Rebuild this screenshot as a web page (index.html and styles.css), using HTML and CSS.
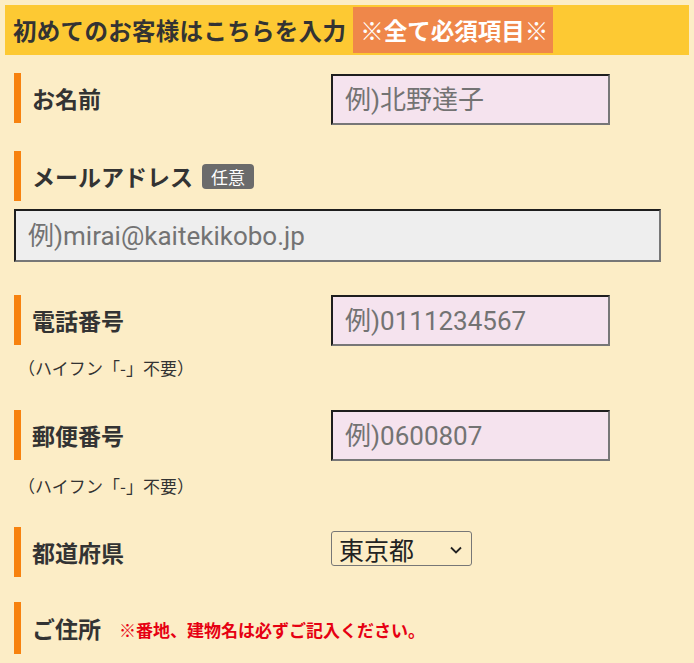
FILE: index.html
```html
<!DOCTYPE html>
<html lang="ja">
<head>
<meta charset="utf-8">
<title>初めてのお客様</title>
<link rel="stylesheet" href="styles.css">
</head>
<body>
<div class="page">
  <div class="head">
    <span class="head-title">初めてのお客様はこちらを入力</span>
    <span class="head-badge">※全て必須項目※</span>
  </div>

  <div class="form">
    <div class="field f-name">
      <div class="label">お名前</div>
      <input class="inp" type="text" placeholder="例)北野達子">
    </div>

    <div class="field f-mail">
      <div class="label label-auto">メールアドレス<span class="opt">任意</span></div>
    </div>
    <input class="inp inp-wide" type="text" placeholder="例)mirai@kaitekikobo.jp">

    <div class="field f-tel">
      <div class="label">電話番号</div>
      <input class="inp" type="text" placeholder="例)0111234567">
    </div>
    <div class="note">（ハイフン「-」不要）</div>

    <div class="field f-zip">
      <div class="label">郵便番号</div>
      <input class="inp" type="text" placeholder="例)0600807">
    </div>
    <div class="note note-zip">（ハイフン「-」不要）</div>

    <div class="field f-pref">
      <div class="label">都道府県</div>
      <div class="select">
        <span>東京都</span>
        <svg class="chev" width="14" height="10" viewBox="0 0 14 10"><path d="M2 2.5 L7 7.5 L12 2.5" fill="none" stroke="#222" stroke-width="1.8"/></svg>
      </div>
    </div>

    <div class="field f-addr">
      <div class="label label-auto">ご住所<span class="warn">※番地、建物名は必ずご記入ください。</span></div>
    </div>
  </div>
</div>
</body>
</html>
```

FILE: styles.css
```css
html, body {
  margin: 0;
  padding: 0;
  background: #fcedc6;
}
body {
  font-family: Roboto, "Noto Sans CJK JP", sans-serif;
  color: #333;
  overflow: hidden;
}
.page {
  width: 694px;
  height: 663px;
  padding-top: 5px;
  box-sizing: border-box;
}
.head {
  margin: 0 5px 0 5px;
  height: 50px;
  background: #fdc933;
  display: flex;
  align-items: center;
  padding-left: 8px;
  box-sizing: border-box;
}
.head-title {
  font-family: "Noto Sans CJK JP", sans-serif;
  font-weight: bold;
  font-size: 23.5px;
  color: #333;
  letter-spacing: 0.3px;
}
.head-badge {
  margin-left: 7px;
  height: 46px;
  width: 200px;
  box-sizing: border-box;
  background: #ef874a;
  color: #fff;
  font-family: "Noto Sans CJK JP", sans-serif;
  font-weight: bold;
  font-size: 23.5px;
  display: flex;
  align-items: center;
  padding-left: 7px;
}
.form {
  padding-left: 14px;
}
.field {
  display: flex;
  align-items: flex-start;
}
.label {
  width: 317px;
  height: 50px;
  box-sizing: border-box;
  border-left: 7px solid #f7820f;
  padding-left: 11px;
  display: flex;
  align-items: center;
  font-family: "Noto Sans CJK JP", sans-serif;
  font-weight: bold;
  font-size: 23px;
  color: #333;
  flex-shrink: 0;
  white-space: nowrap;
}
.label-auto {
  width: auto;
}
.inp {
  width: 279px;
  height: 51px;
  box-sizing: border-box;
  border: 2px solid;
  border-color: #1e1e1e #777 #777 #1e1e1e;
  background: #f5e3ee;
  padding: 0 12px;
  font-family: Roboto, "Noto Sans CJK JP", sans-serif;
  font-size: 26px;
  color: #333;
  outline: none;
  margin: 0;
}
.inp::placeholder {
  color: #737373;
}
.inp-wide {
  display: block;
  width: 647px;
  height: 53px;
  background: #eeeeee;
  margin-top: 8px;
}
.f-name { margin-top: 18px; }
.f-name .inp { margin-top: 1px; }
.f-mail { margin-top: 26px; }
.opt {
  margin-left: 9px;
  background: #6b6b6b;
  color: #fff;
  font-weight: normal;
  font-size: 17px;
  border-radius: 4px;
  padding: 0 9px;
  height: 25px;
  line-height: 25px;
  margin-top: 1px;
}
.f-tel { margin-top: 33px; }
.note {
  font-family: "Noto Sans CJK JP", sans-serif;
  font-size: 17px;
  color: #333;
  padding-left: 4px;
  line-height: 24px;
  margin-top: 10px;
}
.note-zip { margin-top: 13px; }
.f-zip { margin-top: 30px; }
.f-pref { margin-top: 29px; }
.select {
  width: 141px;
  height: 35px;
  box-sizing: border-box;
  border: 1px solid #777;
  border-radius: 3px;
  background: #fcedc6;
  display: flex;
  align-items: center;
  justify-content: space-between;
  padding: 0 8px 0 7px;
  font-family: "Noto Sans CJK JP", sans-serif;
  font-size: 25px;
  color: #222;
  margin-top: 4px;
}
.chev { margin-top: 2px; }
.f-addr { margin-top: 25px; }
.f-addr .label { height: 52px; }
.warn {
  margin-left: 18px;
  color: #e60012;
  font-size: 17px;
  font-weight: bold;
  margin-top: 2px;
}
```
